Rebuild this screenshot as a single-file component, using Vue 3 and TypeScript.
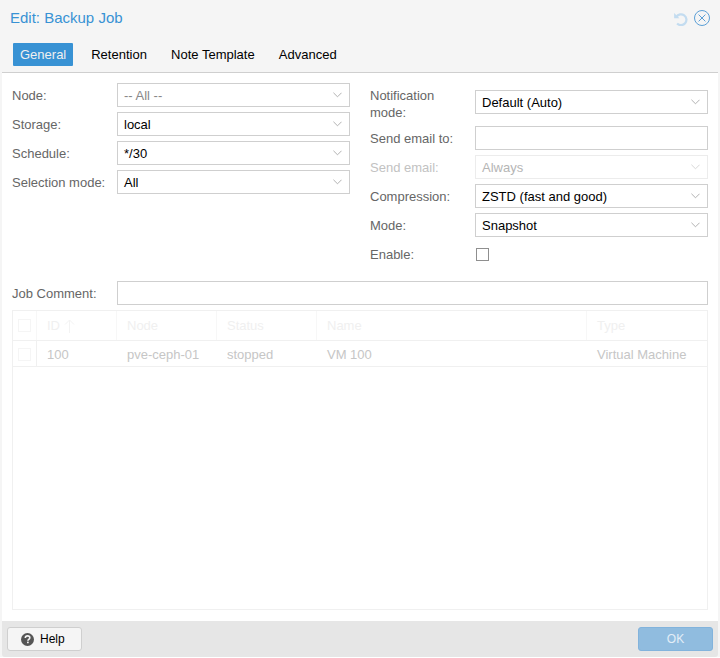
<script setup lang="ts">
interface Field { label: string; value?: string; kind: 'select' | 'input' | 'check'; muted?: boolean; disabled?: boolean }
const left: Field[] = [
  { label: 'Node:', value: '-- All --', kind: 'select', muted: true },
  { label: 'Storage:', value: 'local', kind: 'select' },
  { label: 'Schedule:', value: '*/30', kind: 'select' },
  { label: 'Selection mode:', value: 'All', kind: 'select' },
]
const right: Field[] = [
  { label: 'Send email to:', kind: 'input' },
  { label: 'Send email:', value: 'Always', kind: 'select', disabled: true },
  { label: 'Compression:', value: 'ZSTD (fast and good)', kind: 'select' },
  { label: 'Mode:', value: 'Snapshot', kind: 'select' },
]
const tabs = ['General', 'Retention', 'Note Template', 'Advanced']
const cols = [
  { t: 'Node', v: 'pve-ceph-01', c: 'c-node' },
  { t: 'Status', v: 'stopped', c: 'c-status' },
  { t: 'Name', v: 'VM 100', c: 'c-name' },
  { t: 'Type', v: 'Virtual Machine', c: 'c-type' },
]
</script>

<template>
  <div class="win">
    <header class="head">
      <span class="title">Edit: Backup Job</span>
      <span class="tools">
        <svg class="ic" width="15" height="15" viewBox="0 0 16 16" fill="none" stroke="#c3dcf0" stroke-width="2.4">
          <path d="M1.2 2v5.6h5.6z" fill="#c3dcf0" stroke="none" />
          <path d="M3.6 6.2A5.8 5.8 0 1 1 4.4 13.4" />
        </svg>
        <svg class="ic" width="16" height="16" viewBox="0 0 16 16" fill="none" stroke="#5b9fd6" stroke-width="1">
          <circle cx="8" cy="8" r="7.5" />
          <path d="M4.6 4.6l6.8 6.8M11.4 4.6l-6.8 6.8" />
        </svg>
      </span>
    </header>
    <nav class="tabs">
      <span v-for="(t, i) in tabs" :key="t" class="tab" :class="{ on: i === 0 }">{{ t }}</span>
    </nav>
    <main class="body">
      <div class="cols">
        <div class="col">
          <div v-for="f in left" :key="f.label" class="row">
            <label class="lab">{{ f.label }}</label>
            <div class="box">
              <span :class="{ muted: f.muted }">{{ f.value }}</span>
              <svg class="chev" width="9" height="6" viewBox="0 0 10 6" fill="none" stroke="#a9a9a9"><path d="M.5.5L5 5 9.5.5" /></svg>
            </div>
          </div>
        </div>
        <div class="col col-r">
          <div class="row row-tall">
            <label class="lab">Notification<br />mode:</label>
            <div class="box">
              <span>Default (Auto)</span>
              <svg class="chev" width="9" height="6" viewBox="0 0 10 6" fill="none" stroke="#a9a9a9"><path d="M.5.5L5 5 9.5.5" /></svg>
            </div>
          </div>
          <div v-for="f in right" :key="f.label" class="row" :class="{ dis: f.disabled }">
            <label class="lab">{{ f.label }}</label>
            <div class="box">
              <span>{{ f.value }}</span>
              <svg v-if="f.kind === 'select'" class="chev" width="9" height="6" viewBox="0 0 10 6" fill="none" stroke="#a9a9a9"><path d="M.5.5L5 5 9.5.5" /></svg>
            </div>
          </div>
          <div class="row">
            <label class="lab">Enable:</label>
            <span class="check"></span>
          </div>
        </div>
      </div>
      <div class="row comment">
        <label class="lab">Job Comment:</label>
        <div class="box"></div>
      </div>
      <section class="grid">
        <div class="g-head">
          <div class="g-c c-sel"><span class="g-check"></span></div>
          <div class="g-c c-id">ID
            <svg width="11" height="14" viewBox="0 0 11 14" fill="none" stroke="#f3f3f3"><path d="M5.5 14V1M1 5.5L5.5 1 10 5.5" /></svg>
          </div>
          <div v-for="c in cols" :key="c.t" class="g-c" :class="c.c">{{ c.t }}</div>
        </div>
        <div class="g-row">
          <div class="g-c c-sel sel-b"><span class="g-check"></span></div>
          <div class="g-c c-id">100</div>
          <div v-for="c in cols" :key="c.t" class="g-c" :class="c.c">{{ c.v }}</div>
        </div>
      </section>
    </main>
    <footer class="foot">
      <button class="help">
        <svg width="13" height="13" viewBox="0 0 14 14">
          <circle cx="7" cy="7" r="7" fill="#555" />
          <path d="M4.6 5.4C4.7 3.9 5.8 3.1 7.1 3.1c1.4 0 2.4.9 2.4 2 0 1.7-2.1 1.8-2.1 3.3" fill="none" stroke="#f5f5f5" stroke-width="1.7" />
          <rect x="6.5" y="9.3" width="1.8" height="1.7" fill="#f5f5f5" />
        </svg>
        Help
      </button>
      <button class="ok">OK</button>
    </footer>
  </div>
</template>

<style>
html, body { margin: 0; background: #fff; }
</style>

<style scoped>
.win {
  width: 720px;
  height: 657px;
  background: #f5f5f5;
  display: flex;
  flex-direction: column;
  font: 13px/16px "Liberation Sans", Arial, sans-serif;
  color: #000;
  box-sizing: border-box;
}
.head {
  height: 36px;
  display: flex;
  align-items: center;
  justify-content: space-between;
  padding: 0 10px;
  flex: none;
}
.title { font-size: 15px; color: #3892d4; line-height: 36px; }
.tools { display: flex; gap: 6px; align-items: center; }
.ic { display: block; }
.tabs {
  height: 36px;
  flex: none;
  box-sizing: border-box;
  padding: 7px 0 0 13px;
  display: flex;
  gap: 10.2px;
}
.tab {
  height: 23px;
  padding: 0 7px;
  line-height: 23px;
  border-radius: 1px;
}
.tab.on { background: #3892d4; color: #f0f0f0; margin-right: .8px; }
.body {
  flex: 1;
  margin: 0 2px;
  background: #fff;
  border-top: 1px solid #cfcfcf;
  padding: 10px 10px 11px 10px;
  display: flex;
  flex-direction: column;
  min-height: 0;
}
.cols { display: flex; gap: 20px; height: 198px; flex: none; }
.col { width: 338px; display: flex; flex-direction: column; gap: 5px; }
.col-r { padding-top: 7px; box-sizing: border-box; gap: 5px; }
.row { display: flex; align-items: center; height: 24px; flex: none; }
.row-tall { height: 31px; margin-top: -7px; margin-bottom: 7px; align-items: flex-end; }
.lab { width: 105px; flex: none; color: #666; padding-top: 2px; }
.row-tall .lab { align-self: flex-start; line-height: 17px; margin-top: 4px; padding-top: 0; }
.box {
  flex: 1;
  height: 24px;
  box-sizing: border-box;
  border: 1px solid #cfcfcf;
  background: #fff;
  padding: 2px 6px 0;
  line-height: 20px;
  display: flex;
  align-items: center;
  justify-content: space-between;
  color: #000;
}
.muted { color: #888; }
.chev { flex: none; margin: -3px 1px 0 0; }
.dis .lab { color: #c2c2c2; }
.dis .box { color: #b5b5b5; border-color: #ececec; }
.dis .chev { opacity: .5; }
.check {
  width: 13px; height: 13px; border: 1px solid #8f8f8f; box-sizing: border-box; margin: 1px 0 0 1px; background: #fff;
}
.comment { margin-top: 0; }
.grid {
  margin-top: 5px;
  flex: 1;
  border: 1px solid #f0f0f0;
  color: #c6c6c6;
  min-height: 0;
}
.g-head {
  height: 30px;
  display: flex;
  border-bottom: 1px solid #f0f0f0;
  color: #f0f0f0;
  box-sizing: border-box;
}
.g-row { height: 26px; display: flex; border-bottom: 1px solid #f0f0f0; box-sizing: border-box; }
.g-row .g-c { padding-top: 2px; }
.g-c {
  box-sizing: border-box;
  padding-left: 10px;
  display: flex;
  align-items: center;
  gap: 4px;
  flex: none;
}
.g-head .g-c { border-right: 1px solid #f7f7f7; }
.g-head .g-c:last-child { border-right: 0; }
.c-sel { width: 24px; padding-left: 5px; }
.g-row .sel-b { border-right: 1px solid #f0f0f0; padding-left: 5px; }
.c-id { width: 80px; }
.c-node { width: 100px; }
.c-status { width: 100px; }
.c-name { width: 270px; }
.c-type { flex: 1; }
.g-check { width: 13px; height: 13px; border: 1px solid #f5f5f5; box-sizing: border-box; }
.foot {
  height: 36px;
  margin: 0 2px;
  flex: none;
  background: #e6e6e6;
  display: flex;
  align-items: center;
  justify-content: space-between;
  padding: 0 5px;
  border-radius: 0 0 3px 3px;
}
.help, .ok {
  font: 12px/16px "Liberation Sans", Arial, sans-serif;
  height: 24px;
  border-radius: 3px;
  box-sizing: border-box;
  padding: 0;
}
.help {
  width: 75px;
  background: #f5f5f5;
  border: 1px solid #cfcfcf;
  display: flex;
  align-items: center;
  justify-content: flex-start;
  gap: 6px;
  padding-left: 13px;
  color: #000;
}
.ok { width: 75px; background: #90bcdf; border: 1px solid #82b3dc; color: #e3eef7; }
</style>
